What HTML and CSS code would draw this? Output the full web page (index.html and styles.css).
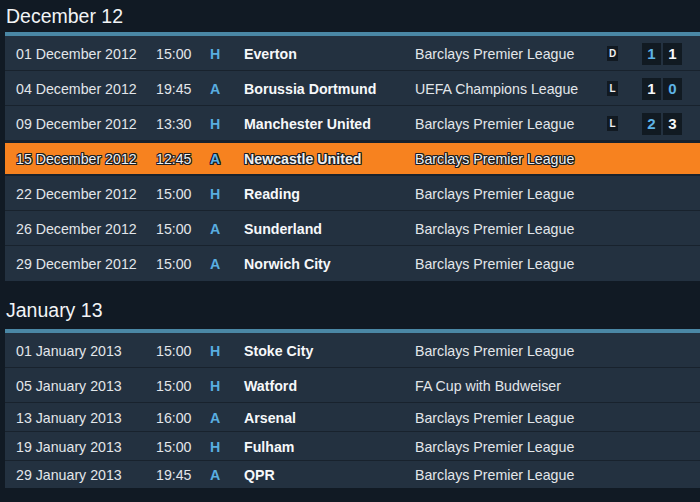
FILE: index.html
```html
<!DOCTYPE html>
<html lang="en">
<head>
<meta charset="utf-8">
<title>Fixtures</title>
<link rel="stylesheet" href="styles.css">
</head>
<body>
<div class="page">
  <section class="section">
    <h2 class="heading">December 12</h2>
    <div class="table">
      <div class="row">
        <span class="date">01 December 2012</span><span class="time">15:00</span><span class="ha">H</span><span class="team">Everton</span><span class="comp">Barclays Premier League</span>
        <span class="res"><span class="badge">D</span></span>
        <span class="score"><span class="box own">1</span><span class="box">1</span></span>
      </div>
      <div class="row">
        <span class="date">04 December 2012</span><span class="time">19:45</span><span class="ha">A</span><span class="team">Borussia Dortmund</span><span class="comp">UEFA Champions League</span>
        <span class="res"><span class="badge">L</span></span>
        <span class="score"><span class="box">1</span><span class="box own">0</span></span>
      </div>
      <div class="row">
        <span class="date">09 December 2012</span><span class="time">13:30</span><span class="ha">H</span><span class="team">Manchester United</span><span class="comp">Barclays Premier League</span>
        <span class="res"><span class="badge">L</span></span>
        <span class="score"><span class="box own">2</span><span class="box">3</span></span>
      </div>
      <div class="row current">
        <span class="date">15 December 2012</span><span class="time">12:45</span><span class="ha">A</span><span class="team">Newcastle United</span><span class="comp">Barclays Premier League</span>
      </div>
      <div class="row">
        <span class="date">22 December 2012</span><span class="time">15:00</span><span class="ha">H</span><span class="team">Reading</span><span class="comp">Barclays Premier League</span>
      </div>
      <div class="row">
        <span class="date">26 December 2012</span><span class="time">15:00</span><span class="ha">A</span><span class="team">Sunderland</span><span class="comp">Barclays Premier League</span>
      </div>
      <div class="row">
        <span class="date">29 December 2012</span><span class="time">15:00</span><span class="ha">A</span><span class="team">Norwich City</span><span class="comp">Barclays Premier League</span>
      </div>
    </div>
  </section>

  <section class="section">
    <h2 class="heading">January 13</h2>
    <div class="table">
      <div class="row">
        <span class="date">01 January 2013</span><span class="time">15:00</span><span class="ha">H</span><span class="team">Stoke City</span><span class="comp">Barclays Premier League</span>
      </div>
      <div class="row">
        <span class="date">05 January 2013</span><span class="time">15:00</span><span class="ha">H</span><span class="team">Watford</span><span class="comp">FA Cup with Budweiser</span>
      </div>
      <div class="row compact">
        <span class="date">13 January 2013</span><span class="time">16:00</span><span class="ha">A</span><span class="team">Arsenal</span><span class="comp">Barclays Premier League</span>
      </div>
      <div class="row compact">
        <span class="date">19 January 2013</span><span class="time">15:00</span><span class="ha">H</span><span class="team">Fulham</span><span class="comp">Barclays Premier League</span>
      </div>
      <div class="row compact">
        <span class="date">29 January 2013</span><span class="time">19:45</span><span class="ha">A</span><span class="team">QPR</span><span class="comp">Barclays Premier League</span>
      </div>
    </div>
  </section>
</div>
</body>
</html>
```
FILE: styles.css
```css
html, body {
  margin: 0;
  padding: 0;
  background: #111a24;
}

body {
  font-family: "Liberation Sans", Arial, sans-serif;
  color: #e2e6ea;
  width: 700px;
  height: 502px;
  overflow: hidden;
}

.page {
  display: flex;
  flex-direction: column;
}

.heading {
  margin: 0;
  padding-left: 6px;
  font-size: 19.5px;
  font-weight: normal;
  line-height: 32px;
  height: 32px;
  color: #f2f4f6;
}

.section + .section {
  margin-top: 13px;
}

.section + .section .heading {
  padding-bottom: 3px;
  line-height: 33px;
}

.table {
  margin-left: 5px;
  border-top: 4px solid #4a87a5;
  background: #233140;
}

.row {
  display: grid;
  grid-template-columns: 140px 54px 34px 171px 192px 35px 1fr;
  align-items: center;
  height: 33px;
  padding-top: 1px;
  padding-left: 11px;
  border-bottom: 1px solid #18222d;
  font-size: 14.2px;
}

.row:last-child {
  border-bottom: none;
  height: 34px;
}

.row.compact {
  height: 27px;
}

.row.compact:last-child {
  height: 26px;
}

.date, .time, .comp {
  color: #e2e6ea;
}

.ha {
  font-weight: bold;
  color: #59aee0;
}

.team {
  font-weight: bold;
  color: #f6f8fa;
}

.res {
  display: flex;
}

.badge {
  width: 11px;
  height: 15px;
  background: #111921;
  color: #f0f0f0;
  font-size: 10px;
  font-weight: bold;
  display: flex;
  align-items: center;
  justify-content: center;
}

.score {
  display: flex;
  gap: 2px;
}

.box {
  width: 19px;
  height: 22px;
  background: #111a22;
  color: #f6f8fa;
  font-size: 15px;
  font-weight: bold;
  display: flex;
  align-items: center;
  justify-content: center;
}

.box.own {
  color: #5db3e6;
}

.row.current {
  background: #f7821f;
  height: 30px;
  border-top: 2px solid #18222d;
  border-bottom: 2px solid #18222d;
}

.row.current .date,
.row.current .time,
.row.current .team,
.row.current .comp {
  color: #eef0f2;
}

.row.current span {
  text-shadow:
    1px 0 0 #1b1e22, -1px 0 0 #1b1e22,
    0 1px 0 #1b1e22, 0 -1px 0 #1b1e22,
    1px 1px 0 #1b1e22, -1px -1px 0 #1b1e22,
    1px -1px 0 #1b1e22, -1px 1px 0 #1b1e22;
}

.row.current .ha {
  color: #5db3e6;
}
```
